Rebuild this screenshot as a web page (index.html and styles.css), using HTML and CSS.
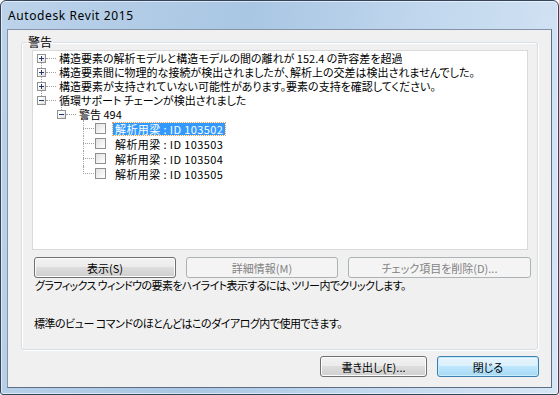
FILE: index.html
```html
<!DOCTYPE html>
<html lang="ja">
<head>
    <meta charset="UTF-8">
    <title>Autodesk Revit 2015</title>
    <link rel="stylesheet" href="styles.css">
</head>
<body>
<div class="window">
    <div class="titlebar">Autodesk Revit 2015</div>

    <div class="client">
        <fieldset class="group">
            <legend>警告</legend>

            <!-- Warning tree -->
            <ul class="tree">
                <li class="node lv0 more"><span class="exp plus"></span><span class="conn"></span><span class="label">構造要素の解析モデルと構造モデルの間の離れが 152.4 の許容差を超過</span></li>
                <li class="node lv0 more"><span class="exp plus"></span><span class="conn"></span><span class="label">構造要素間に物理的な接続が検出されましたが、解析上の交差は検出されませんでした。</span></li>
                <li class="node lv0 more"><span class="exp plus"></span><span class="conn"></span><span class="label">構造要素が支持されていない可能性があります。要素の支持を確認してください。</span></li>
                <li class="node lv0"><span class="exp minus"></span><span class="conn"></span><span class="label">循環サポート チェーンが検出されました</span></li>
                <li class="node lv1"><span class="exp minus"></span><span class="conn"></span><span class="label">警告 494</span></li>
                <li class="node lv2"><span class="conn"></span><span class="chk"></span><span class="label sel">解析用梁 : ID 103502</span></li>
                <li class="node lv2"><span class="conn"></span><span class="chk"></span><span class="label">解析用梁 : ID 103503</span></li>
                <li class="node lv2"><span class="conn"></span><span class="chk"></span><span class="label">解析用梁 : ID 103504</span></li>
                <li class="node lv2 last"><span class="conn"></span><span class="chk"></span><span class="label">解析用梁 : ID 103505</span></li>
            </ul>

            <div class="actions">
                <button class="btn show">表示(S)</button>
                <button class="btn details" disabled>詳細情報(M)</button>
                <button class="btn remove" disabled>チェック項目を削除(D)...</button>
            </div>

            <p class="hint">グラフィックス ウィンドウの要素をハイライト表示するには、ツリー内でクリックします。</p>
            <p class="hint second">標準のビュー コマンドのほとんどはこのダイアログ内で使用できます。</p>
        </fieldset>

        <div class="footer">
            <button class="btn export">書き出し(E)...</button>
            <button class="btn close default">閉じる</button>
        </div>
    </div>
</div>
</body>
</html>
```

FILE: styles.css
```css
* {
    box-sizing: border-box;
}

body {
    margin: 0;
    width: 559px;
    height: 395px;
    overflow: hidden;
    background: #fff;
    font-family: "Noto Sans CJK JP", sans-serif;
    font-size: 11px;
    font-feature-settings: "palt";
    color: #000;
}

/* Window frame */
.window {
    width: 559px;
    height: 395px;
    display: flex;
    flex-direction: column;
    border: 1px solid #34445a;
    border-radius: 6px 6px 3px 3px;
    background: linear-gradient(100deg, #bcd3ea 0%, #a9c6e3 40%, #c2d8ee 70%, #d7e6f5 100%);
    box-shadow: inset 0 0 0 1px rgba(255, 255, 255, 0.55);
}

.titlebar {
    height: 28px;
    padding-left: 7px;
    display: flex;
    align-items: center;
    font-family: "Noto Sans", sans-serif;
    font-size: 12px;
    letter-spacing: 0.6px;
    font-feature-settings: normal;
}

.client {
    flex: 1;
    margin: 0 6px 6px;
    display: flex;
    flex-direction: column;
    background: #f0f0f0;
    border: 1px solid;
    border-color: #8394a8 #5e6e82 #5e6e82 #8394a8;
}

/* Group box */
.group {
    margin: 5px 13px 0;
    min-width: 0;
    padding: 0 6px 19px 10px;
    border: 1px solid #d5dfe5;
    border-radius: 3px;
    box-shadow: 1px 1px 0 #fff, inset 1px 1px 0 #fff;
}

.group legend {
    margin-left: -5px;
    padding: 0 1px;
    font-size: 12px;
    line-height: 14px;
}

/* Tree */
.tree {
    list-style: none;
    margin: 1px 3px 0 0;
    padding: 0;
    height: 200px;
    background: #fff;
    border: 1px solid #dadada;
    overflow: hidden;
}

.node {
    position: relative;
    display: flex;
    align-items: center;
    height: 14px;
    line-height: 14px;
    white-space: nowrap;
}

.lv0 {
    padding-left: 4px;
}

.lv1 {
    padding-left: 24px;
}

.lv2 {
    height: 15px;
    padding-left: 50px;
}

.lv0.more::after {
    content: "";
    position: absolute;
    left: 8px;
    top: 7px;
    height: 14px;
    border-left: 1px dotted #a0a0a0;
}

.lv1::before {
    content: "";
    position: absolute;
    left: 28px;
    top: 0;
    height: 7px;
    border-left: 1px dotted #a0a0a0;
}

.lv1::after {
    content: "";
    position: absolute;
    left: 50px;
    top: 11px;
    height: 3px;
    border-left: 1px dotted #a0a0a0;
}

.lv2::before {
    content: "";
    position: absolute;
    left: 50px;
    top: 0;
    bottom: 0;
    border-left: 1px dotted #a0a0a0;
}

.lv2.last::before {
    bottom: 7px;
}

.exp {
    position: relative;
    z-index: 1;
    width: 9px;
    height: 9px;
    flex: none;
    border: 1px solid #919191;
    background: linear-gradient(135deg, #fff 30%, #dcdcdc);
}

.exp::before {
    content: "";
    position: absolute;
    left: 1px;
    top: 3px;
    width: 5px;
    height: 1px;
    background: #1f3b6e;
}

.exp.plus::after {
    content: "";
    position: absolute;
    left: 3px;
    top: 1px;
    width: 1px;
    height: 5px;
    background: #1f3b6e;
}

.conn {
    flex: none;
    width: 10px;
    margin-right: 3px;
    border-top: 1px dotted #a0a0a0;
}

.lv2 .conn {
    width: 11px;
    margin-right: 1px;
}

.chk {
    flex: none;
    width: 11px;
    height: 11px;
    margin-right: 7px;
    border: 1px solid #8e8f8f;
    background: linear-gradient(135deg, #e2e2e2, #fff);
}

.label {
    padding: 0 2px;
    line-height: 12px;
}

.lv0 .label,
.lv1 .label {
    padding: 0;
}

.lv2 .label {
    letter-spacing: 0.4px;
}

.label.sel {
    background: #3399ff;
    color: #fff;
    outline: 1px dotted #e8a45c;
}

/* Buttons */
.actions {
    display: flex;
    gap: 10px;
    margin: 7px 0 0 2px;
}

.btn {
    height: 21px;
    padding: 0;
    font: inherit;
    color: #000;
    border: 1px solid #707070;
    border-radius: 3px;
    background: linear-gradient(#f2f2f2 0%, #ebebeb 49%, #dddddd 50%, #cfcfcf 100%);
    box-shadow: inset 0 0 0 1px #fcfcfc;
}

.btn:disabled {
    color: #838383;
    border-color: #adb2b5;
    background: #f4f4f4;
    box-shadow: none;
}

.show {
    width: 142px;
}

.details {
    width: 152px;
}

.remove {
    width: 183px;
}

.hint {
    margin: 0 0 0 3px;
    line-height: 14px;
    letter-spacing: -0.6px;
}

.hint.second {
    margin: 24px 0 0 2px;
    letter-spacing: -0.5px;
}

/* Dialog footer */
.footer {
    display: flex;
    justify-content: flex-end;
    gap: 10px;
    margin: 6px 12px 0 0;
}

.export {
    width: 107px;
}

.close {
    width: 102px;
}

.btn.default {
    border-color: #3c7fb1;
    background: linear-gradient(#eaf6fd 0%, #d9f0fc 49%, #bee6fd 50%, #a7d9f5 100%);
    box-shadow: inset 0 0 0 1px #c6ecfd;
}
```
